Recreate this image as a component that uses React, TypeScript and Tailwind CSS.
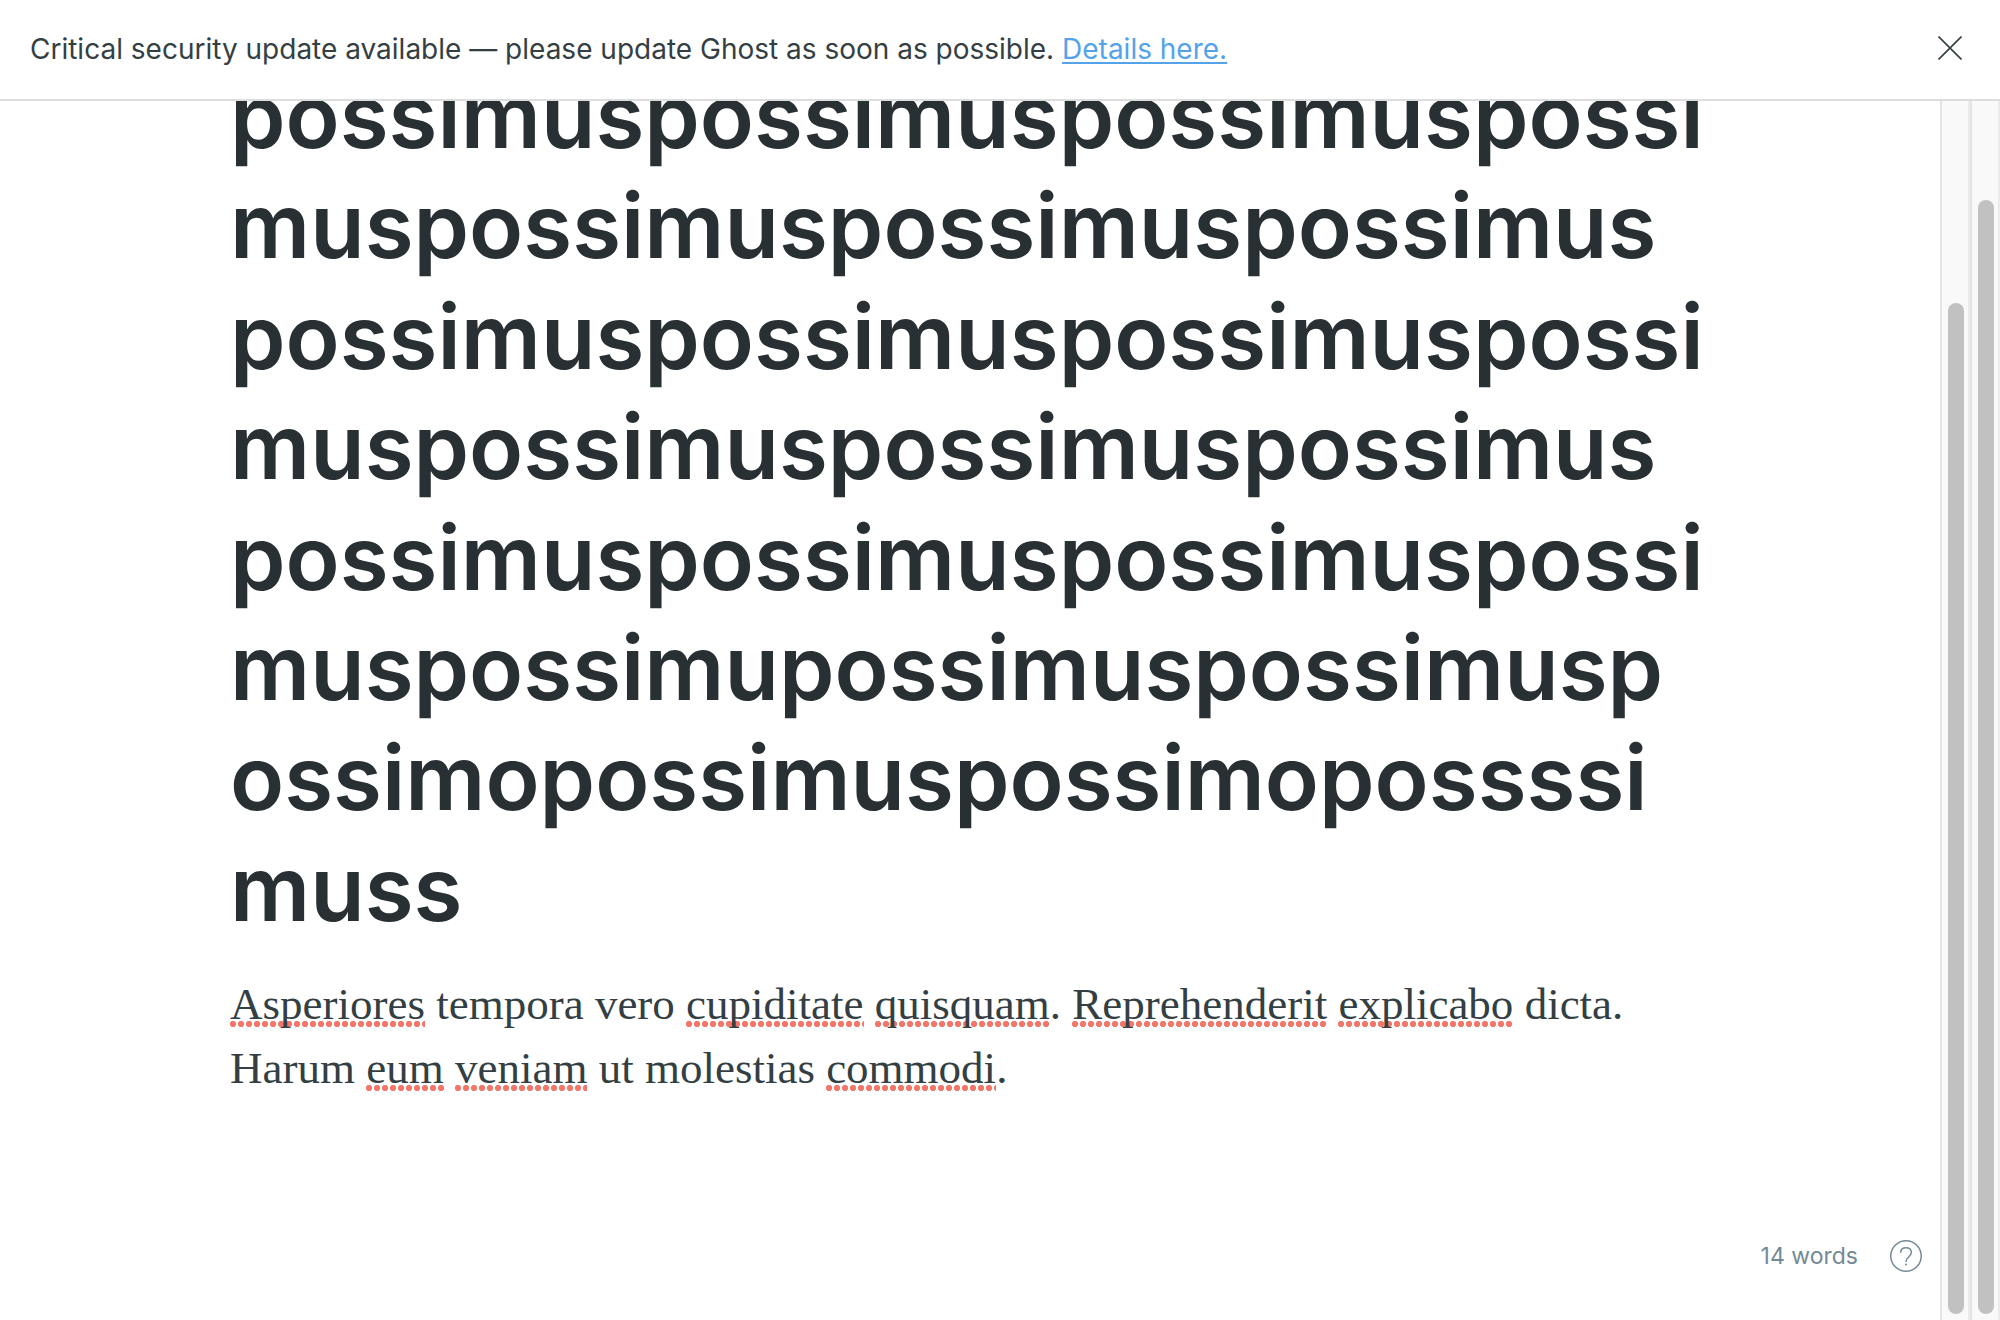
import { useState } from "react";

const titleLines = [
  "possimuspossimuspossimuspossi",
  "muspossimuspossimuspossimus",
  "possimuspossimuspossimuspossi",
  "muspossimuspossimuspossimus",
  "possimuspossimuspossimuspossi",
  "muspossimupossimuspossimusp",
  "ossimopossimuspossimopossssi",
  "muss",
];

const segments = [
  { text: "Asperiores", misspelled: true },
  { text: " tempora vero " },
  { text: "cupiditate", misspelled: true },
  { text: " " },
  { text: "quisquam", misspelled: true },
  { text: ". " },
  { text: "Reprehenderit", misspelled: true },
  { text: " " },
  { text: "explicabo", misspelled: true },
  { text: " dicta. Harum " },
  { text: "eum", misspelled: true },
  { text: " " },
  { text: "veniam", misspelled: true },
  { text: " ut molestias " },
  { text: "commodi", misspelled: true },
  { text: "." },
];

const misspelledClass =
  "bg-[radial-gradient(circle_at_3px_3px,#f2766a_2.8px,transparent_3.4px)] bg-[length:8px_6px] bg-[position:left_bottom_2px] bg-repeat-x";

function ScrollTrack({ offset }: { offset: string }) {
  return (
    <div className={`flex w-[30px] shrink-0 flex-col border-x-2 border-l-[#e4e4e4] border-r-[#ebebeb] bg-[#f9f9f9] px-1.5 pb-1.5 ${offset}`}>
      <div className="w-4 flex-1 rounded-full bg-[#c1c1c1]" />
    </div>
  );
}

function Notice({ onClose }: { onClose: () => void }) {
  return (
    <header className="flex shrink-0 items-start justify-between border-b-2 border-[#dddddd] bg-white pt-7 pr-[38px] pb-[29px] pl-[30px]">
      <p className="text-[28px] leading-[42px] text-[#343f44]">
        Critical security update available — please update Ghost as soon as possible.{" "}
        <a href="#details" className="text-[#54a3e8] underline decoration-2 underline-offset-3">
          Details here.
        </a>
      </p>
      <button type="button" aria-label="Close" onClick={onClose} className="mt-2 size-6">
        <svg viewBox="0 0 24 24" className="size-6" fill="none" stroke="#343f44" strokeWidth="1.6">
          <path d="M.5.5l23 23M23.5.5l-23 23" />
        </svg>
      </button>
    </header>
  );
}

export default function App() {
  const [open, setOpen] = useState(true);
  const [title, setTitle] = useState(titleLines.join("\n"));
  return (
    <div className="flex h-screen flex-col overflow-hidden bg-white font-[Inter,'Liberation_Sans',sans-serif]">
      {open && <Notice onClose={() => setOpen(false)} />}
      <div className="flex min-h-0 flex-1">
        <main className="relative flex min-w-0 flex-1 flex-col justify-end overflow-hidden pb-[220px]">
          <div className="mx-auto w-full max-w-[1480px]">
            <textarea
              aria-label="Post title"
              rows={8}
              spellCheck={false}
              value={title}
              onChange={(e) => setTitle(e.target.value)}
              className="block w-full resize-none overflow-hidden text-[89px] leading-[1.24] font-semibold text-[#293033] outline-none"
            />
            <p className="mt-7 font-['Liberation_Serif',serif] text-[45px] leading-16 text-[#343f44]">
              {segments.map((s, i) => (
                <span key={i} className={s.misspelled ? misspelledClass : undefined}>
                  {s.text}
                </span>
              ))}
            </p>
          </div>
          <div className="absolute right-[18px] bottom-12 flex items-center gap-8 text-[#738a94]">
            <span className="text-[23px] leading-8">14 words</span>
            <button type="button" aria-label="Help">
              <svg viewBox="0 0 32 32" className="size-8" fill="none" stroke="currentColor" strokeWidth="1.5">
                <circle cx="16" cy="16" r="15.25" />
                <path d="M10.7 12.7c0-3 2-5 5.3-5s5.3 2 5.3 4.800c0 4.500-5.300 4-5.300 9.500" />
                <circle cx="16" cy="24.5" r="1" fill="currentColor" stroke="none" />
              </svg>
            </button>
          </div>
        </main>
        <ScrollTrack offset="pt-[202px]" />
        <ScrollTrack offset="pt-[99px]" />
      </div>
    </div>
  );
}
